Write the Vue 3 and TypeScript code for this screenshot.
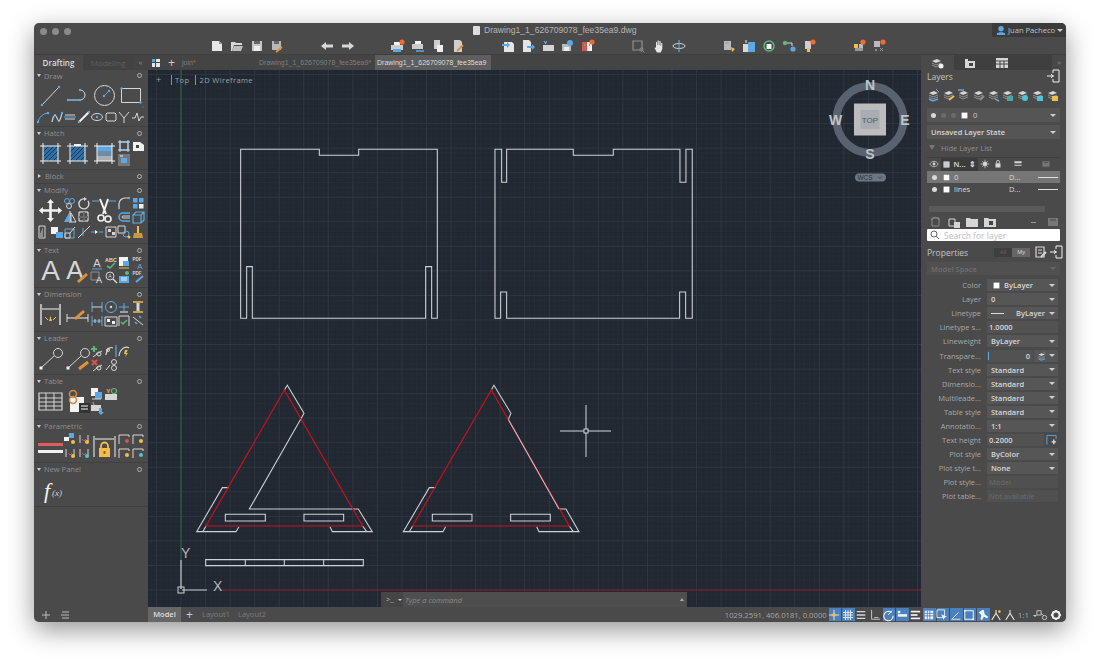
<script setup lang="ts">
import { h } from 'vue'

// 图标用的形状：路径或文字
interface Shape {
  d?: string
  s?: string
  f?: string
  w?: number
  t?: string
  x?: number
  y?: number
  z?: number
  b?: number
}

const G = '#d6d6d6'
const W = '#f2f2f2'
const B = '#5aa9e6'
const Y = '#f3bd4b'
const R = '#d9534f'
const O = '#f26a2e'
const N = '#5cb87a'
const D = '#8f8f8f'

const L = (d: string, s = G, w = 1): Shape => ({ d, s, w })
const F = (d: string, f = G): Shape => ({ d, f })
const T = (x: number, y: number, z: number, t: string, f = G, b = 400): Shape => ({ x, y, z, t, f, b })
const circ = (x: number, y: number, r: number) =>
  `M${x - r} ${y}a${r} ${r} 0 1 0 ${r * 2} 0a${r} ${r} 0 1 0 ${-r * 2} 0`
const box = (x: number, y: number, w: number, hh: number) => `M${x} ${y}h${w}v${hh}h${-w}z`
const dot = (x: number, y: number, c = B, r = 1.2) => F(circ(x, y, r), c)

// 图层图标：叠起来的几张纸
const sheets = [F('M2 5l5-2 4 2-5 2z', G), L('M2 7l4 2 5-2M2 9l4 2 5-2', D)]
const stack = (...extra: Shape[]) => [...sheets, ...extra]
const hatched = [
  F(box(6, 6, 15, 15), '#2f6ea5'),
  L('M6 12l6-6M6 17l11-11M6 21l15-15M11 21l10-10M16 21l5-5', '#1d3a55'),
  L('M3 6h21M3 21h21M6 3v21M21 3v21', W),
]
const ctr = (c: string) => [L('M3 3v8M11 3v8', G), L('M5 7l2 2 2-2', R), dot(10, 10, c, 2)]
const frame = (c: string) => [L('M2 12V3h10v2', G), dot(10, 9, c, 2)]

const icons: Record<string, Shape[]> = {
  // Draw
  line: [L('M5 23L22 5'), dot(5, 23), dot(22, 5)],
  poly: [L('M4 18h12a5 5 0 0 0 0-10'), L('M4 18h12', B), dot(4, 18), dot(16, 18), dot(16, 8)],
  circle: [L(circ(13.5, 13.5, 10)), L('M13.5 13.5l4-4', B), dot(13, 14), dot(18, 9)],
  rect: [L(box(3.5, 6.5, 19, 14)), dot(3.5, 6.5), dot(22.5, 20.5), dot(25, 25, D, 0.6)],
  arc: [L('M2 12a11 11 0 0 1 10-9', B), dot(2, 12), dot(12, 3)],
  spline: [L('M2 12l3-8 4 8 3-9', B), L('M2 12c1-7 3-9 5-4s3 4 5-5'), dot(12, 3)],
  mline: [L('M2 5h10M2 9h10'), L('M1 7h12', B)],
  pline2: [L('M2 12L12 2', W, 2), dot(2, 12), dot(12, 2)],
  ellipse: [L('M1.5 7a5.5 3.5 0 1 0 11 0a5.5 3.5 0 1 0-11 0'), dot(7, 7)],
  rrect: [L('M3 3h8l1 1v6l-1 1H3l-1-1V4z')],
  ray: [L('M2 2l5 6 5-6M7 8v5')],
  wave: [L('M1 8h3l2-5 2 8 2-4h3')],
  // Hatch
  hatch1: [...hatched],
  hatch2: [...hatched, F(box(10, 4, 7, 2), W)],
  hatch3: [F(box(6, 6, 15, 5), B), F(box(6, 11, 15, 5), '#6e8ca6'), F(box(6, 16, 15, 5), '#a9afb5'), L('M3 6h21M3 21h21M6 3v21M21 3v21', W)],
  bound: [L(box(3, 3, 8, 8), B, 1.5), L('M1 3h12M1 11h12M3 1v12M11 1v12', G)],
  label: [F('M2 3h7l4 3v6H2z', W), F(box(5, 6, 3, 3), '#444')],
  sel: [F(box(1, 1, 12, 12), '#777'), F(box(4, 5, 6, 5), B), L('M3 3h3', W)],
  // Modify
  move: [F('M13.5 2l3.5 4h-2.2v6.3h6.3V10l4 3.5-4 3.5v-2.2h-6.3v6.3H17l-3.5 4-3.5-4h2.2v-6.3H5.9V17l-4-3.5 4-3.5v2.3h6.3V6H10z', W)],
  scissors: [L('M1 4h7M17 4h8', B), L('M9 2l6 15M17 2l-5 15', W, 2), L(circ(10, 21, 3), W, 1.6), L(circ(17, 22, 3), W, 1.6)],
  copy: [L(circ(4, 5, 2.5), B), L(circ(9, 5, 2.5), B), L(circ(6, 10, 2.5), G)],
  rotate: [L('M11 5a5 5 0 1 1-3-2', G, 1.4), F('M7 1l3 2-3 2z', G)],
  fillet: [L('M2 13V8a6 6 0 0 1 6-6h5', G, 1.2), dot(2, 12), dot(12, 2)],
  array: [F(box(2, 2, 4.5, 4.5), B), F(box(8, 2, 4.5, 4.5), B), F(box(2, 8, 4.5, 4.5), B), F(box(8, 8, 4.5, 4.5), W)],
  mirror: [F('M6 3v9H1z', B), L('M8 3l5 9H8z', G), L('M7 1v12', W)],
  stretch: [L(box(2, 2, 9, 9), W, 1), L('M2 7h9M7 2v9', '#666', 2)],
  offset: [L('M13 3H6a4 4 0 0 0 0 8h7', B, 1.5), L('M13 6H6a1 1 0 0 0 0 2h7', G)],
  box3d: [L('M2 5h8v8H2zM2 5l3-3h8v8l-3 3M10 5l3-3', B, 1.2)],
  erase: [L('M3 1h6v12H3z', G), F('M4 9l3-7v11H3z', D)],
  copy2: [F(box(1, 2, 7, 7), W), F(box(6, 7, 7, 6), B)],
  scale: [L(box(2, 4, 9, 9), B), L(box(2, 8, 5, 5), G), L('M7 8l5-6', G)],
  trim: [L('M1 13L13 1', G), L('M6 3v8', B)],
  join: [L('M1 7h4M9 7h4', B), F('M5 5l3 2-3 2z', W)],
  matchp: [L(box(2, 2, 10, 10)), F(box(4, 4, 3, 3)), F(box(8, 7, 3, 3))],
  group: [L(box(1, 1, 7, 7), G), L(circ(9, 9, 3), B), dot(12, 12, Y, 1.5)],
  broom: [F(box(6, 1, 2, 7), Y), F('M3 8h8l1 5H2z', '#c99a3d')],
  // Text
  bigA: [T(13.5, 23, 28, 'A', G, 400)],
  bigAp: [T(11, 22, 26, 'A', G, 400), L('M14 25l9-8', '#e0913c', 3)],
  underA: [T(7, 11, 11, 'A', G), L('M2 13h10', B)],
  abc: [T(7, 6, 5.5, 'ABC', G, 700), L('M3 10l3 2 5-5', N, 1.6)],
  tbl2: [F(box(2, 1, 9, 9), W), F(box(6, 5, 6, 5), B), L('M2 12h10', Y)],
  pdfA: [T(6, 5, 4.5, 'PDF', G, 700), T(9, 13, 8, 'A', B)],
  findA: [L(box(1, 2, 8, 8), D), T(9, 13, 9, 'A', W)],
  mag: [L(circ(6, 6, 4), G), L('M9 9l4 4', G, 1.5), T(6, 8, 5, 'A', G)],
  colorT: [F(box(2, 6, 10, 7), B), L('M4 8h6M4 10h6', W), dot(10, 3, N, 2)],
  pdfP: [T(6, 5, 4.5, 'PDF', G, 700), L('M5 12l7-6', B, 2)],
  // Dimension
  dim1: [L('M4 3v21M23 3v21', G, 1.5), L('M5 8h17', W), F('M12 20l1.5-5 1.5 5z', Y), L('M8 16l3 3M19 16l-3 3', Y)],
  dim2: [L('M3 13v8M24 13v8', G), L('M3 17h21', W), L('M11 18l9-8', '#e0913c', 3)],
  dimH: [L('M2 2v10M12 2v10', B), L('M2 7h10', G)],
  dimO: [L(circ(7, 7, 5.5), B), dot(7, 7, G, 1.2)],
  dimT: [L('M2 7h10M7 3v8', B), L('M3 12h8', W)],
  dimI: [L('M2 2h10M2 12h10', Y, 1.5), F(box(5.5, 3, 3, 8), G)],
  dimC: [L('M2 2v10M12 2v10M2 7h10', B), L('M5 5v4M9 5v4', G)],
  dimB: [L(box(1, 3, 12, 9), G), F(box(3, 5, 3, 3), W), F(box(8, 7, 3, 3), W)],
  dimV: [L('M2 12V2h10v10', G), L('M4 8l2 2 4-4', N, 1.5)],
  dimX: [L('M2 3l10 8', G), L('M8 2l2 2M4 8l2 2', B, 1.5)],
  // Leader
  lead: [L(circ(21, 8, 4.5), G), L('M4 23L17 11', G), F(box(2.5, 21.5, 3, 3), W)],
  leadP: [L(circ(21, 8, 4.5), G), L('M4 23L17 11', G), F(box(2.5, 21.5, 3, 3), W), L('M15 24l9-7', '#e0913c', 3)],
  leadAdd: [L('M4 2v6M1 5h6', N, 2), L('M6 10l6-3M3 13l4-3', G), L(circ(9, 10, 2), G)],
  leadRm: [L('M2 2l5 5M7 2L2 7', R, 2), L('M6 10l6-3M3 13l4-3', G), L(circ(9, 10, 2), G)],
  curve: [L('M2 11c1-8 5-8 7-7', G, 1.2), L('M12 1v12', B, 1.2), L(circ(4, 6, 1.5), G)],
  curve2: [L('M2 12c1-8 7-10 10-8', G, 1.2), F('M8 6l3 0-2 3 2 0-3 4 1-3-2 0z', Y)],
  leadB: [L('M2 12l4-5', G), L(circ(10, 4, 2.5), G), L(circ(10, 10, 2.5), G)],
  // Table
  table: [L(box(2, 5, 23, 17), G, 1.2), L('M2 10h23M2 14h23M2 18h23M9 5v17M17 5v17', G)],
  tableL: [F(box(6, 9, 14, 15), W), F(box(15, 15, 11, 10), '#333'), L('M17 18h7M17 21h7', W), L(circ(9, 6, 3.5), '#cf8a4a', 1.6), L(circ(9, 12, 3.5), '#cf8a4a', 1.6)],
  tblA: [F(box(1, 1, 7, 8), W), F(box(5, 5, 7, 7), B), L('M2 12h9', G)],
  tblB: [L('M3 2l2 4M6 2L4 6', '#cf8a4a', 1.3), F(box(1, 7, 12, 6), G), L(circ(10, 4, 2.5), N, 1.2)],
  tblC: [L('M3 1l1 3', '#cf8a4a', 1.3), F(box(1, 4, 10, 6), G), F('M9 7h3v4h2l-3 3-3-3h1z', B)],
  // Parametric
  eq: [F(box(1, 10, 25, 3), '#e25b5b'), F(box(1, 17, 25, 3), W)],
  geo: [F(box(6, 1, 5, 5), B), F(box(1, 5, 5, 4), W), dot(10, 10, Y, 2)],
  ctrY: ctr(Y),
  ctrC: ctr('#4fc3d9'),
  ctrM: ctr(Y),
  lock: [L('M3 3v21M24 3v21', G, 1.2), L('M4 6h19', W), L('M10 16v-3a3.5 3.5 0 0 1 7 0v3', Y, 1.8), F(box(8, 15, 11, 9), Y), F(box(12.5, 18, 2, 3), '#8a6a1f')],
  frR: frame(R),
  frY: frame(Y),
  frB: frame(Y),
  frC: frame('#4fc3d9'),
  fx: [T(10, 22, 22, 'f', W), T(20, 20, 9, '(x)', G)],
  // 工具栏
  fnew: [F('M2 2h7l3 3v7H2z', '#e8e8e8'), F('M9 2l3 3H9z', '#999')],
  fopen: [F('M1 3h4l1 1h6v2H4l-2 6H1z', '#d8d8d8'), F('M4 7h9l-2 5H2z', '#bdbdbd')],
  fsave: [F(box(2, 2, 10, 10), '#c8c8c8'), F(box(4, 2, 6, 3), '#666'), F(box(4, 7, 6, 5), '#eee')],
  fsaveas: [F(box(2, 2, 9, 9), '#b8b8b8'), F(box(4, 2, 5, 3), '#666'), L('M6 13l6-5', '#e0913c', 2)],
  undo: [F('M1 7l5-4v2.5h7v3H6V11z', '#d8d8d8')],
  redo: [F('M13 7L8 3v2.5H1v3h7V11z', '#d8d8d8')],
  plot: [F(box(4, 2, 6, 3), W), F(box(1, 5, 12, 5), '#ccc'), F(box(3, 9, 8, 4), B)],
  plotDot: [F(box(3, 3, 6, 3), W), F(box(0, 6, 12, 5), '#ccc'), F(box(2, 10, 8, 3), B), F(circ(11, 3, 2.6), O)],
  plot2: [F(box(4, 2, 6, 3), W), F(box(1, 5, 11, 5), '#ccc'), L('M5 12h8', B, 1.5)],
  sheet: [F(box(3, 1, 6, 9), '#cfcfcf'), F(box(6, 6, 6, 7), '#eee')],
  sheetP: [F('M3 1h6l2 2v10H3z', '#cfcfcf'), L('M6 12l6-6', '#e0913c', 2)],
  impt: [F('M3 3h8l2 2v8H3z', '#e4e4e4'), F('M1 5h5V3l3 3-3 3V7H1z', B)],
  expt: [F('M2 1h6l2 2v10H2z', '#e4e4e4'), F('M6 7h5V5l3 3-3 3V9H6z', B)],
  share: [L('M3 2l2 3M6 2L4 5', B, 1.2), F(box(2, 6, 11, 6), '#d4d4d4')],
  cloud: [F(box(1, 5, 9, 7), '#bbb'), F(box(3, 8, 5, 4), '#eee'), F(circ(9, 4, 3), B)],
  cmp: [F(box(1, 3, 5, 9), R), F(box(6, 3, 5, 9), W), L('M3 6h1M8 6h1', N, 2), F(circ(11, 3, 2.6), O)],
  zoomw: [L(box(2, 2, 9, 9), D, 1.2), L(circ(10.5, 10.5, 1.6), D), L('M11.5 11.5l2 2', D)],
  hand: [F('M4 6V3h1v3h.6V1.5h1.2V6h.6V2h1.2v5h.5V4h1.2v6l-1.5 3.5H5L2.5 9l.7-.7L4 9z', '#e6e6e6')],
  orbit: [L('M1 7a6 2.5 0 1 0 12 0a6 2.5 0 1 0-12 0', G), L('M7 1v12', B, 1.2)],
  block: [F(box(2, 2, 7, 9), '#b9b9b9'), L('M3 4h4', B), F('M9 8l4 2-3 3z', Y)],
  insert: [F(box(1, 5, 6, 8), '#d8d8d8'), F(box(6, 3, 7, 10), B), L('M4 1v3', W)],
  xref: [L(circ(7, 7, 5), N, 1.5), F(box(4.5, 5, 5, 5), W)],
  nodes: [dot(3, 4, N, 2.2), dot(11, 10, B, 2.6), L('M5 4h5v3', G)],
  mark: [F(box(3, 2, 6, 8), '#cfcfcf'), F(box(5, 9, 3, 4), Y), F(circ(11, 3, 2.6), O)],
  gridDot: [F(box(2, 5, 4, 4), Y), F(box(7, 5, 4, 4), '#bbb'), F(box(3, 9, 8, 3), '#999'), F(circ(11, 3, 2.6), O)],
  cogDot: [F(box(2, 2, 6, 6), '#bbb'), L('M3 10l2 2M5 10l-2 2M8 9l3 3M11 9l-3 3', D), F(circ(11, 3, 2.6), O)],
  // Layers 面板
  lay1: [...sheets, L('M2 11l4 2 5-2', B, 1.5), L('M9 1l3 3', B)],
  lay2: stack(L('M7 12l5-4', Y, 2)),
  lay3: stack(L('M1 2h6', B, 1.5)),
  lay4: stack(L('M8 12l4-4', D, 2)),
  lay5: stack(L('M8 11l4 2', B, 1.5)),
  lay6: stack(F(box(6, 8, 6, 5), '#4fa5a5')),
  lay7: stack(F(circ(9, 10, 3), '#4fc3d9')),
  lay8: stack(F(box(6, 8, 6, 5), '#4fc3d9')),
  lay9: stack(F(box(6, 8, 6, 5), Y)),
  eye: [L('M1 7c3-5 9-5 12 0c-3 5-9 5-12 0', G), F(circ(7, 7, 2), G)],
  freeze: [F(circ(7, 7, 3), G), L('M7 1v12M1 7h12M3 3l8 8M11 3l-8 8', G)],
  padlock: [L('M5 6V4a2 2 0 0 1 4 0v2', G, 1.2), F(box(3.5, 6, 7, 6), G)],
  weight: [F(box(2, 3, 10, 3), G), F(box(2, 8, 10, 1.5), G)],
  vp: [F(box(2, 3, 10, 8), '#777'), L('M4 5h6', '#444')],
  lnew: [L('M3 3h7v8H3z', '#8a8a8a'), L('M2 5l4-3 5 3', '#8a8a8a')],
  lfilter: [L('M2 4h6v7H2z', G), F(box(7, 7, 6, 6), G)],
  lfolder: [F('M1 3h4l1 1h7v8H1z', G)],
  lfolder2: [F('M1 3h4l1 1h7v8H1z', G), F(box(6, 6, 4, 4), '#444')],
  exit: [L('M7 1h6v12H7M7 4V1M7 13v-3', W), L('M1 7h7M5 5l2 2-2 2', W)],
  note: [L(box(2, 2, 8, 10), G, 1.2), L('M4 5h4M4 8h4', G), L('M7 12l5-5', G, 2)],
  tab1: [...sheets, F(circ(11, 10, 2.5), W)],
  tab2: [F('M2 3h3v2h7v7H2z', G), F(box(6, 7, 4, 3), '#444')],
  tab3: [F(box(1, 2, 12, 10), G), L('M1 5h12M1 8h12M5 5v7M9 5v7', '#444')],
  // 状态栏
  snap: [L('M7 1v12M1 7h12', W), F('M7 4l3 3-3 3-3-3z', Y)],
  grid: [L('M1 4h12M1 7h12M1 10h12M4 1v12M7 1v12M10 1v12', W)],
  dots: [L('M2 3h10M2 7h10M2 11h10', G, 1.6)],
  ortho: [L('M3 1v11h10', G), L('M6 10h5', G)],
  polar: [L('M11 4a5.5 5.5 0 1 0 2 4', W, 1.3), L('M7 7l5-5', W)],
  lweight: [F(box(2, 6, 11, 3), W), F(box(2, 2, 3, 3), W)],
  dyn: [F(box(2, 2, 11, 2), W), F(box(2, 6, 8, 2), W), F(box(2, 10, 11, 2), W)],
  trans: [F(box(2, 2, 10, 10), W), L('M2 5h10M2 8h10M5 2v10M8 2v10', '#4a80bd')],
  selc: [L(box(1, 1, 9, 9), W), F('M6 6l7 3-3 1-1 3z', W)],
  angle: [L('M2 12h10M2 12l8-8', W)],
  sq: [L(box(2, 2, 10, 10), W, 1.2), F(box(1, 1, 2, 2), W), F(box(11, 11, 2, 2), W)],
  anno: [F('M6 1h2l1 5 4 3-1 2-4-2-2 4-2-1 1-5-3-3z', W)],
  annoD: [L('M2 13l5-8 5 8M7 5V1', W, 1.2), dot(11, 3, Y, 1.6)],
  annoS: [L('M2 13l5-8 5 8M7 5V1', W, 1.2)],
  work: [L(box(1, 2, 5, 5), G), L(circ(10, 10, 2.5), G), L('M6 5l3 3', G)],
  gear: [L(circ(7, 7, 4.2), W, 2.4), L('M7 1v2M7 11v2M1 7h2M11 7h2M3 3l1.4 1.4M9.6 9.6L11 11M11 3L9.6 4.4M4.4 9.6L3 11', W, 2)],
}

// 小图标组件，每个图标只画 path 和文字
function Ico(props: { n: string; size?: number }) {
  const size = props.size ?? 14
  const shapes = icons[props.n] ?? []
  return h(
    'svg',
    { width: size, height: size, viewBox: `0 0 ${size} ${size}`, style: { display: 'block', overflow: 'visible', flex: 'none' } },
    shapes.map((p) =>
      p.t
        ? h('text', { x: p.x, y: p.y, 'font-size': p.z, 'font-weight': p.b, fill: p.f, 'text-anchor': 'middle', 'font-family': p.t === 'f' || p.t === '(x)' ? '"Liberation Serif", serif' : '"Liberation Sans", sans-serif', 'font-style': p.t === 'f' || p.t === '(x)' ? 'italic' : 'normal' }, p.t)
        : h('path', { d: p.d, fill: p.f ?? 'none', stroke: p.s ?? 'none', 'stroke-width': p.w ?? 1 }),
    ),
  )
}

// 左侧面板
const b = (n: string) => ({ n, big: true })
const s = (n: string) => ({ n, big: false })
const panels = [
  { title: 'Draw', height: 57, items: [b('line'), b('poly'), b('circle'), b('rect'), ...['arc', 'spline', 'mline', 'pline2', 'ellipse', 'rrect', 'ray', 'wave'].map(s)] },
  { title: 'Hatch', height: 43, items: [b('hatch1'), b('hatch2'), b('hatch3'), s('bound'), s('label'), s('sel')] },
  { title: 'Block', height: 14, closed: true, items: [] },
  { title: 'Modify', height: 60, items: [b('move'), s('copy'), s('rotate'), b('scissors'), s('fillet'), s('array'), s('mirror'), s('stretch'), s('offset'), s('box3d'), ...['erase', 'copy2', 'scale', 'trim', 'join', 'matchp', 'group', 'broom'].map(s)] },
  { title: 'Text', height: 44, items: [b('bigA'), b('bigAp'), ...['underA', 'abc', 'tbl2', 'pdfA', 'findA', 'mag', 'colorT', 'pdfP'].map(s)] },
  { title: 'Dimension', height: 44, items: [b('dim1'), b('dim2'), ...['dimH', 'dimO', 'dimT', 'dimI', 'dimC', 'dimB', 'dimV', 'dimX'].map(s)] },
  { title: 'Leader', height: 43, items: [b('lead'), b('leadP'), s('leadAdd'), s('curve'), s('curve2'), s(''), s('leadRm'), s('leadB')] },
  { title: 'Table', height: 45, items: [b('table'), b('tableL'), s('tblA'), s('tblB'), s(''), s(''), s('tblC')] },
  { title: 'Parametric', height: 43, items: [b('eq'), s('geo'), s('ctrY'), b('lock'), s('frR'), s('frY'), s('ctrM'), s('ctrC'), s('frB'), s('frC')] },
  { title: 'New Panel', height: 44, items: [b('fx')] },
]

// 顶部工具栏分组
const toolGroups = [
  ['fnew', 'fopen', 'fsave', 'fsaveas'],
  ['undo', 'redo'],
  ['plotDot', 'plot2', 'sheet', 'sheetP'],
  ['impt', 'expt', 'share', 'cloud', 'cmp'],
  ['zoomw', 'hand', 'orbit'],
  ['block', 'insert', 'xref', 'nodes', 'mark'],
  ['gridDot', 'cogDot'],
]

const layerTools = ['lay1', 'lay2', 'lay3', 'lay4', 'lay5', 'lay6', 'lay7', 'lay8', 'lay9']
const layers = [
  { name: '0', active: true },
  { name: 'lines', active: false },
]

// 属性面板
const properties = [
  { label: 'Color', value: 'ByLayer', kind: 'color' },
  { label: 'Layer', value: '0', kind: 'select' },
  { label: 'Linetype', value: 'ByLayer', kind: 'linetype' },
  { label: 'Linetype s...', value: '1.0000', kind: 'input' },
  { label: 'Lineweight', value: 'ByLayer', kind: 'select' },
  { label: 'Transpare...', value: '0', kind: 'alpha' },
  { label: 'Text style', value: 'Standard', kind: 'select' },
  { label: 'Dimensio...', value: 'Standard', kind: 'select' },
  { label: 'Multileade...', value: 'Standard', kind: 'select' },
  { label: 'Table style', value: 'Standard', kind: 'select' },
  { label: 'Annotatio...', value: '1:1', kind: 'select' },
  { label: 'Text height', value: '0.2000', kind: 'height' },
  { label: 'Plot style', value: 'ByColor', kind: 'select' },
  { label: 'Plot style t...', value: 'None', kind: 'select' },
  { label: 'Plot style...', value: 'Model', kind: 'disabled' },
  { label: 'Plot table...', value: 'Not available', kind: 'disabled' },
]

const statusIcons = [
  { n: 'snap', on: true },
  { n: 'grid', on: true },
  { n: 'dots', on: false },
  { n: 'ortho', on: false },
  { n: 'polar', on: true },
  { n: 'lweight', on: true },
  { n: 'dyn', on: false },
  { n: 'trans', on: true },
  { n: 'selc', on: true },
  { n: 'angle', on: true },
  { n: 'sq', on: true },
  { n: 'anno', on: true },
  { n: 'annoD', on: false },
  { n: 'annoS', on: false },
]

// 图纸网格，原点在 (181, 590)
const step = 24.55
const minorXs: number[] = []
const minorYs: number[] = []
const majorXs: number[] = []
const majorYs: number[] = []
for (let i = -7; i * (step / 5) + 181 < 925; i++) {
  ;(i % 5 === 0 ? majorXs : minorXs).push(181 + (i * step) / 5)
}
for (let i = -106; i <= 4; i++) {
  ;(i % 5 === 0 ? majorYs : minorYs).push(590 + (i * step) / 5)
}
const gridMinor = [...minorXs.map((x) => `M${x} 70V607`), ...minorYs.map((y) => `M148 ${y}H921`)].join('')
const gridMajor = [...majorXs.map((x) => `M${x} 70V607`), ...majorYs.map((y) => `M148 ${y}H921`)].join('')

// 图形（坐标按 3 倍放大量出来的）
const plateA = 'M32 28H268V46H386V28H622V535H605V380H587V535H67V380H50V535H32Z'
const plateB =
  'M795 28H815V127H830V28H1030V46H1150V28H1350V127H1368V28H1387V535H1367V456H1349V535H830V456H812V535H795Z'
const triWhite =
  'M283 30L292 16L342 100L332 118L178 387H505L547 455H427L420 440M147 440L138 455H20L97 323H117M38 455L48 438M518 438L530 455' +
  'M106 403H226V423H106ZM342 403H461V423H342Z' +
  'M727 403H846V423H727ZM962 403H1081V423H962Z' +
  'M904 30L912 16L963 100L955 118M1107 387H1128L1167 455H1047L1040 440M767 440L759 455H640L718 323H737M658 455L668 438M1138 438L1150 455' +
  'M47 539H520V557H47ZM166 539V557M283 539V557M401 539V557'
const triRed = 'M48 438L283 30L518 438ZM668 438L904 30L1138 438Z'
</script>

<template>
  <div class="page">
    <div class="window">
      <!-- 标题栏 -->
      <header class="titlebar">
        <div class="lights"><i></i><i></i><i></i></div>
        <div class="title">
          <span class="title-icon"></span>
          Drawing1_1_626709078_fee35ea9.dwg
        </div>
        <div class="user">
          <svg class="user-icon" width="10" height="11" viewBox="0 0 11 11"><circle cx="5.5" cy="3.5" r="3" fill="#5aa9e6" /><path d="M1 10.5h9v-2l-3-1H4l-3 1z" fill="#5aa9e6" /></svg>
          <span>Juan Pacheco</span>
          <b class="caret"></b>
        </div>
      </header>

      <!-- 工具栏 -->
      <div class="toolbar">
        <div v-for="(group, i) in toolGroups" :key="i" class="tool-group">
          <span v-for="n in group" :key="n" class="tool"><Ico :n="n" /></span>
        </div>
      </div>

      <div class="workspace">
        <!-- 左侧工具面板 -->
        <aside class="left">
          <div class="left-tabs">
            <span class="left-tab on">Drafting</span>
            <span class="left-tab">Modeling</span>
            <span class="collapse">«</span>
          </div>
          <section v-for="p in panels" :key="p.title" class="panel" :style="{ height: p.height + 'px' }">
            <div class="panel-head">
              <b :class="p.closed ? 'tri-right' : 'tri-down'"></b>
              <span>{{ p.title }}</span>
              <i class="panel-gear"></i>
            </div>
            <div class="panel-body">
              <span v-for="(it, i) in p.items" :key="i" :class="it.big ? 'cell-big' : 'cell'">
                <Ico v-if="it.n" :n="it.n" :size="it.big ? 27 : 14" />
              </span>
            </div>
          </section>
          <div class="left-foot">
            <svg width="10" height="10" viewBox="0 0 10 10"><path d="M5 1v8M1 5h8" stroke="#bdbdbd" /></svg>
            <svg width="10" height="10" viewBox="0 0 10 10"><path d="M2 2h7M1 5h8M2 8h7" stroke="#bdbdbd" /></svg>
          </div>
        </aside>

        <div class="main">
          <div class="main-top">
            <!-- 中间绘图区 -->
            <main class="center">
              <div class="doc-tabs">
                <span class="doc-grid"><i></i><i></i><i></i><i></i></span>
                <span class="doc-plus">+</span>
                <span class="doc-tab first">join*</span>
                <span class="doc-tab wide">Drawing1_1_626709078_fee35ea9*</span>
                <span class="doc-tab active">Drawing1_1_626709078_fee35ea9</span>
              </div>

              <div class="canvas">
                <svg class="drawing" viewBox="148 70 773 537" width="773" height="537">
                  <path :d="gridMinor" stroke="#252c36" fill="none" />
                  <path :d="gridMajor" stroke="#2f3742" fill="none" />
                  <path d="M181 70V560" stroke="#2f6a38" fill="none" />
                  <path d="M222 590H921" stroke="#8a1c24" fill="none" />

                  <g fill="none" stroke="#cfd2d5" stroke-width="3.2">
                    <path transform="translate(230 140) scale(.3333)" :d="plateA" />
                    <path transform="translate(230 140) scale(.3333)" :d="plateB" />
                    <path transform="translate(190 380) scale(.3333)" :d="triWhite" />
                    <path transform="translate(190 380) scale(.3333)" :d="triRed" stroke="#c8101e" stroke-width="3.6" />
                    <path transform="translate(190 380) scale(.3333)" d="M955 118L1107 387" stroke="#dcb6b8" />
                  </g>

                  <!-- UCS -->
                  <g fill="none" stroke="#c9cdd0">
                    <path d="M181 589V560M182 590H207" stroke-width="1.2" />
                    <rect x="178" y="587" width="6" height="6" />
                  </g>
                  <text x="181" y="558" class="ucs">Y</text>
                  <text x="213" y="591" class="ucs">X</text>

                  <!-- 十字光标 -->
                  <g fill="none" stroke="#d5d8da">
                    <path d="M560 431H584M588 431H611M586 405V429M586 433V457" />
                    <rect x="584" y="429" width="4" height="4" />
                  </g>

                  <!-- ViewCube -->
                  <circle cx="870" cy="119.500" r="33.500" fill="none" stroke="#59636f" stroke-width="8" />
                  <rect x="854" y="103.500" width="32" height="32" fill="#bcbcbc" />
                  <rect x="860.500" y="110" width="19" height="19" fill="#a7adb2" />
                  <text x="870" y="122.500" class="cube-top">TOP</text>
                  <text x="870" y="90" class="compass">N</text>
                  <text x="870" y="159" class="compass">S</text>
                  <text x="905" y="124.500" class="compass">E</text>
                  <text x="835.500" y="124.500" class="compass">W</text>
                  <rect x="855" y="173.500" width="31" height="8" rx="4" fill="#6b7785" />
                  <text x="865" y="180" class="wcs">WCS</text>
                  <path d="M878 176.500l2 2 2-2" stroke="#2a323c" fill="none" stroke-width=".7" />
                </svg>

                <div class="view-label">
                  <span class="view-plus">+</span>
                  <span class="view-item">Top</span>
                  <span class="view-item">2D Wireframe</span>
                </div>

                <div class="command">
                  <span class="cmd-prefix">&gt;_ <b class="caret small"></b></span>
                  <span class="cmd-input">Type a command</span>
                  <b class="cmd-up"></b>
                </div>
              </div>
            </main>

            <!-- 右侧面板 -->
            <aside class="right">
              <div class="right-tabs">
                <span class="right-tab on"><Ico n="tab1" /></span>
                <span class="right-tab"><Ico n="tab2" /></span>
                <span class="right-tab"><Ico n="tab3" /></span>
                <span class="right-more">»</span>
              </div>

              <div class="side-title">
                <span>Layers</span>
                <Ico n="exit" />
              </div>
              <div class="layer-tools">
                <Ico v-for="n in layerTools" :key="n" :n="n" />
              </div>
              <div class="combo layer-combo">
                <i class="dot"></i>
                <i class="dot dim"></i>
                <i class="dot dim"></i>
                <i class="swatch"></i>
                <span>0</span>
                <b class="caret"></b>
              </div>
              <div class="combo state-combo">
                <span>Unsaved Layer State</span>
                <b class="caret"></b>
              </div>
              <div class="hide-list"><b class="tri-down dim"></b>Hide Layer List</div>

              <div class="layer-head">
                <span class="lh eye"><Ico n="eye" /></span>
                <span class="lh name"><i class="swatch small"></i>N... <em>⇕</em></span>
                <span class="lh sm"><Ico n="freeze" /></span>
                <span class="lh sm"><Ico n="padlock" /></span>
                <span class="lh md"><Ico n="weight" /></span>
                <span class="lh md"><Ico n="vp" /></span>
              </div>
              <div v-for="l in layers" :key="l.name" class="layer-row" :class="{ on: l.active }">
                <i class="dot"></i>
                <i class="swatch"></i>
                <span class="layer-name">{{ l.name }}</span>
                <span class="layer-d">D...</span>
                <i class="layer-line"></i>
              </div>
              <div class="layer-scroll"></div>
              <div class="layer-actions">
                <Ico n="lnew" />
                <Ico n="lfilter" />
                <Ico n="lfolder" />
                <Ico n="lfolder2" />
                <span class="minus"></span>
                <Ico n="vp" />
              </div>
              <div class="search">
                <svg width="10" height="10" viewBox="0 0 10 10"><circle cx="4" cy="4" r="3" stroke="#666" fill="none" /><path d="M6 6l3 3" stroke="#666" /></svg>
                Search for layer
              </div>

              <div class="side-title props-title">
                <span>Properties</span>
                <div class="toggle"><span>All</span><span class="on">My</span></div>
                <Ico n="note" />
                <Ico n="exit" />
              </div>
              <div class="combo space-combo">
                <span>Model Space</span>
                <b class="caret dim"></b>
              </div>

              <div v-for="p in properties" :key="p.label" class="prop-row">
                <label>{{ p.label }}</label>
                <div class="prop-value" :class="p.kind">
                  <i v-if="p.kind === 'color'" class="swatch"></i>
                  <i v-if="p.kind === 'linetype'" class="sample"></i>
                  <i v-if="p.kind === 'alpha'" class="slider"></i>
                  <span>{{ p.value }}</span>
                  <b v-if="['color', 'select', 'linetype'].includes(p.kind)" class="caret"></b>
                </div>
                <div v-if="p.kind === 'alpha'" class="prop-extra">
                  <Ico n="lay1" />
                  <b class="caret"></b>
                </div>
                <div v-if="p.kind === 'height'" class="prop-pick">
                  <svg width="12" height="12" viewBox="0 0 12 12"><path d="M1 11V1h10v4" stroke="#5aa9e6" fill="none" /><path d="M6 8h5M8.500 5.500v5" stroke="#ddd" fill="none" stroke-width="1.500" /></svg>
                </div>
              </div>
            </aside>
          </div>

          <footer class="statusbar">
            <span class="layout-tab on">Model</span>
            <span class="layout-plus">+</span>
            <span class="layout-tab">Layout1</span>
            <span class="layout-tab">Layout2</span>
            <span class="coords">1029.2591, 406.0181, 0.0000</span>
            <span v-for="si in statusIcons" :key="si.n" class="st" :class="{ on: si.on }"><Ico :n="si.n" /></span>
            <span class="scale">1:1 <b class="caret small"></b></span>
            <span class="st"><Ico n="work" /></span>
            <span class="st"><Ico n="gear" /></span>
          </footer>
        </div>
      </div>
    </div>
  </div>
</template>

<style scoped>
.page {
  padding: 23px 34px 45px;
  width: 1032px;
  height: 599px;
}

.window {
  width: 1032px;
  height: 599px;
  display: flex;
  flex-direction: column;
  background-color: #4a4a4a;
  border-radius: 5px;
  box-shadow: 0 8px 26px rgba(0, 0, 0, 0.42);
  color: #c9c9c9;
  font-family: 'Open Sans', 'Liberation Sans', sans-serif;
  font-size: 8px;
  overflow: hidden;
}

.titlebar {
  height: 14px;
  display: flex;
  align-items: center;
  position: relative;
  flex: none;
}

.lights {
  display: flex;
  gap: 5px;
  padding: 3px 0 0 5.5px;
}

.lights i {
  width: 7px;
  height: 7px;
  border-radius: 50%;
  background-color: #8b8b8b;
}

.title {
  position: absolute;
  left: 439px;
  top: 2px;
  display: flex;
  align-items: center;
  gap: 4px;
  font-family: 'Liberation Sans', sans-serif;
  font-size: 8.600px;
  color: #b5b5b5;
}

.title-icon {
  width: 7px;
  height: 9px;
  background-color: #ddd;
  border-radius: 1px;
}

.user {
  margin-left: auto;
  width: 74px;
  height: 14px;
  padding-left: 4px;
  box-sizing: border-box;
  display: flex;
  align-items: center;
  gap: 2px;
  background-color: #3b3b3b;
  font-size: 7.600px;
  color: #c4c4c4;
  white-space: nowrap;
}

.user-icon {
  flex: none;
}

.caret {
  width: 0;
  height: 0;
  margin-left: auto;
  border-left: 3px solid transparent;
  border-right: 3px solid transparent;
  border-top: 3px solid #cfcfcf;
}

.caret.small {
  display: inline-block;
  margin-left: 2px;
  border-width: 2.500px 2px 0;
  vertical-align: middle;
}

.caret.dim {
  border-top-color: #666;
}

.user .caret {
  margin-right: 3px;
}

.toolbar {
  flex: none;
  height: 18px;
  display: flex;
  align-items: center;
  gap: 30px;
  padding-left: 173px;
  border-bottom: 1px solid #3e3e3e;
  box-sizing: border-box;
}

.tool-group {
  display: flex;
}

.tool {
  width: 20.100px;
  display: flex;
  justify-content: center;
}

.workspace {
  flex: 1;
  min-height: 0;
  display: flex;
}

/* 左侧面板 */
.left {
  width: 114px;
  flex: none;
  display: flex;
  flex-direction: column;
}

.left-tabs {
  height: 15px;
  display: flex;
  align-items: center;
}

.left-tab {
  width: 50px;
  height: 15px;
  line-height: 15px;
  text-align: center;
  background-color: #424242;
  color: #5f5f5f;
  font-size: 8px;
}

.left-tab.on {
  width: 49px;
  background-color: #4a4a4a;
  color: #dcdcdc;
  font-weight: 600;
}

.collapse {
  flex: 1;
  text-align: center;
  color: #888;
  background-color: #444;
  height: 15px;
  line-height: 14px;
}

.panel {
  box-sizing: border-box;
  border-bottom: 1px solid #404040;
  overflow: hidden;
  flex: none;
}

.panel-head {
  height: 12px;
  display: flex;
  align-items: center;
  padding: 0 3px;
  box-sizing: border-box;
  font-size: 7.500px;
  color: #8f8f8f;
  gap: 3px;
}

section.panel:first-of-type .panel-head {
  height: 11px;
}

.tri-down {
  width: 0;
  height: 0;
  border-left: 2.500px solid transparent;
  border-right: 2.500px solid transparent;
  border-top: 3px solid #cfcfcf;
}

.tri-down.dim {
  border-left-width: 3.500px;
  border-right-width: 3.500px;
  border-top: 5px solid #777;
  margin-right: 6px;
}

.tri-right {
  width: 0;
  height: 0;
  margin: 0 1px;
  border-top: 2.500px solid transparent;
  border-bottom: 2.500px solid transparent;
  border-left: 3px solid #cfcfcf;
}

.panel-gear {
  margin-left: auto;
  margin-right: 3px;
  width: 3px;
  height: 3px;
  border: 1.500px solid #b5b5b5;
  border-radius: 50%;
}

.panel-body {
  display: grid;
  grid-template-columns: repeat(8, 13.500px);
  grid-auto-rows: 13.500px;
  row-gap: 1px;
  padding-left: 2.500px;
}

.cell,
.cell-big {
  display: flex;
  align-items: center;
  justify-content: center;
}

.cell-big {
  grid-column: span 2;
  grid-row: span 2;
}

.left-foot {
  margin-top: auto;
  height: 15px;
  display: flex;
  align-items: center;
  gap: 9px;
  padding-left: 7px;
}

/* 中间 */
.main {
  flex: 1;
  min-width: 0;
  display: flex;
  flex-direction: column;
}

.main-top {
  flex: 1;
  min-height: 0;
  display: flex;
}

.center {
  width: 773px;
  flex: none;
  display: flex;
  flex-direction: column;
}

.doc-tabs {
  height: 15px;
  display: flex;
  align-items: center;
  background-color: #444;
  font-family: 'Liberation Sans', sans-serif;
  font-size: 7px;
  color: #7e7e7e;
  flex: none;
}

.doc-grid {
  width: 15px;
  height: 15px;
  padding: 3.500px;
  box-sizing: border-box;
  display: grid;
  grid-template-columns: 1fr 1fr;
  gap: 1px;
}

.doc-grid i {
  background-color: #dfe6ee;
}

.doc-grid i:first-child {
  background-color: #5aa9e6;
}

.doc-plus {
  width: 17px;
  text-align: center;
  color: #ccc;
  font-size: 12px;
  line-height: 14px;
}

.doc-tab {
  height: 15px;
  line-height: 15px;
  padding-left: 2px;
  box-sizing: border-box;
}

.doc-tab.first {
  width: 77px;
}

.doc-tab.wide {
  width: 118px;
}

.doc-tab.active {
  width: 116px;
  background-color: #5e5e5e;
  color: #dcdcdc;
}

.canvas {
  position: relative;
  height: 537px;
  flex: none;
  background-color: #212832;
  overflow: hidden;
}

.drawing {
  display: block;
}

.ucs {
  font-family: 'Liberation Sans', sans-serif;
  font-size: 14px;
  fill: #b4b8bc;
}

.cube-top {
  font-family: 'Liberation Sans', sans-serif;
  font-size: 8px;
  fill: #555;
  text-anchor: middle;
}

.compass {
  font-family: 'Liberation Sans', sans-serif;
  font-size: 14px;
  font-weight: 700;
  fill: #bfc4c8;
  text-anchor: middle;
}

.wcs {
  font-family: 'Liberation Sans', sans-serif;
  font-size: 6.500px;
  fill: #2a323c;
  text-anchor: middle;
}

.view-label {
  position: absolute;
  left: 8px;
  top: 3px;
  display: flex;
  align-items: center;
  font-size: 7.500px;
  letter-spacing: 0.4px;
  color: #9aa0a6;
}

.view-plus {
  width: 15px;
  font-size: 9px;
}

.view-item {
  border-left: 1px solid #8b9096;
  padding: 0 6px 0 3px;
  line-height: 10px;
}

.command {
  position: absolute;
  left: 233px;
  bottom: 0;
  width: 306px;
  height: 15px;
  display: flex;
  align-items: center;
  background-color: #4e4e4e;
  color: #8a8a8a;
  font-size: 7.500px;
}

.cmd-prefix {
  width: 22px;
  padding-left: 5px;
  box-sizing: border-box;
  height: 15px;
  line-height: 15px;
  background-color: #454545;
  margin-right: 2px;
  color: #bbb;
  white-space: nowrap;
}

.cmd-input {
  font-style: italic;
}

.cmd-up {
  margin-left: auto;
  margin-right: 3px;
  width: 0;
  height: 0;
  border-left: 2.500px solid transparent;
  border-right: 2.500px solid transparent;
  border-bottom: 3px solid #aaa;
}

.statusbar {
  height: 15px;
  flex: none;
  display: flex;
  align-items: center;
  background-color: #4a4a4a;
  font-size: 7.500px;
  color: #7d7d7d;
  padding-right: 3.300px;
}

.layout-tab {
  height: 15px;
  line-height: 15px;
  width: 36px;
  text-align: center;
}

.layout-tab.on {
  width: 33px;
  background-color: #676767;
  color: #dedede;
  font-weight: 600;
}

.layout-plus {
  width: 17px;
  text-align: center;
  font-size: 12px;
  line-height: 13px;
  color: #ccc;
}

.coords {
  margin-left: auto;
  margin-right: 1px;
  font-size: 7.700px;
  color: #a5a5a5;
  white-space: nowrap;
}

.st {
  width: 13.500px;
  height: 13px;
  display: flex;
  align-items: center;
  justify-content: center;
  flex: none;
}

.st svg {
  transform: scale(0.85);
}

.st.on {
  background-color: #4a80bd;
  box-shadow: inset 1px 0 0 #4a4a4a;
}

.scale {
  width: 19px;
  padding-left: 1px;
  box-sizing: border-box;
  color: #a5a5a5;
  font-size: 8px;
  white-space: nowrap;
}

/* 右侧 */
.right {
  width: 145px;
  flex: none;
  box-sizing: border-box;
  padding: 0 6px;
  display: flex;
  flex-direction: column;
  font-size: 7.500px;
}

.right-tabs {
  height: 15px;
  margin: 0 -6px;
  display: flex;
  background-color: #3f3f3f;
  flex: none;
}

.right-tab {
  width: 32.500px;
  display: flex;
  align-items: center;
  justify-content: center;
}

.right-tab.on {
  background-color: #4a4a4a;
}

.right-more {
  margin-left: auto;
  width: 14px;
  text-align: center;
  color: #888;
  line-height: 14px;
  background-color: #484848;
}

.side-title {
  height: 12px;
  display: flex;
  align-items: center;
  justify-content: space-between;
  font-size: 8.500px;
  color: #c4c4c4;
  flex: none;
}

.layer-tools {
  display: flex;
  justify-content: space-between;
  height: 14px;
  margin: 6px 0;
  flex: none;
}

.combo {
  height: 14px;
  display: flex;
  align-items: center;
  padding: 0 4px;
  box-sizing: border-box;
  background-color: #555;
  border-radius: 1px;
  flex: none;
}

.layer-combo {
  gap: 5px;
}

.state-combo {
  margin-top: 3px;
  color: #d5d5d5;
  font-weight: 600;
  font-size: 7.500px;
}

.dot {
  width: 5px;
  height: 5px;
  border-radius: 50%;
  background-color: #d8d8d8;
  flex: none;
}

.dot.dim {
  background-color: #6a6a6a;
}

.swatch {
  width: 5px;
  height: 5px;
  background-color: #fff;
  border: 1px solid #222;
  outline: 1px solid #999;
  outline-offset: -1px;
  flex: none;
  border-radius: 1px;
}

.swatch.small {
  background-color: #ccc;
  margin-right: 3px;
}

.hide-list {
  height: 17.500px;
  display: flex;
  align-items: center;
  padding-left: 2px;
  color: #8f8f8f;
  flex: none;
}

.layer-head {
  height: 14.500px;
  display: flex;
  border-top: 1px solid #3f3f3f;
  box-sizing: border-box;
  flex: none;
}

.lh {
  display: flex;
  align-items: center;
  justify-content: center;
}

.lh svg {
  width: 10px;
  height: 10px;
}

.lh.eye {
  width: 14px;
}

.lh.name {
  width: 37px;
  background-color: #3c3c3c;
  color: #ddd;
  font-weight: 600;
  white-space: nowrap;
}

.lh.name em {
  font-style: normal;
  margin-left: 3px;
}

.lh.sm {
  width: 13px;
}

.lh.md {
  width: 28px;
}

.layer-row {
  height: 12px;
  display: flex;
  align-items: center;
  padding-left: 5px;
  color: #d8d8d8;
  flex: none;
}

.layer-row.on {
  background-color: #767676;
}

.layer-row .swatch {
  margin-left: 6px;
}

.layer-name {
  width: 55px;
  margin-left: 3px;
  padding-left: 1px;
}

.layer-d {
  width: 29px;
}

.layer-line {
  width: 20px;
  height: 0;
  border-top: 1px solid #e0e0e0;
}

.layer-scroll {
  margin: 11px 15px 0 2px;
  height: 6px;
  background-color: #5a5a5a;
  border-radius: 1px;
  flex: none;
}

.layer-actions {
  margin-top: 3px;
  height: 14px;
  display: flex;
  align-items: center;
  gap: 4px;
  padding-left: 2px;
  flex: none;
}

.minus {
  margin-left: 30px;
  margin-right: 6px;
  width: 5px;
  border-top: 1px solid #999;
}

.search {
  height: 12px;
  background-color: #fff;
  border-radius: 1px;
  display: flex;
  align-items: center;
  gap: 4px;
  padding-left: 3px;
  color: #bdbdbd;
  font-size: 8.500px;
  flex: none;
}

.props-title {
  margin-top: 5px;
  justify-content: flex-start;
  gap: 1px;
}

.toggle {
  margin-left: 25px;
  margin-right: 3px;
  display: flex;
  font-size: 5.500px;
}

.toggle span {
  width: 18px;
  height: 9px;
  line-height: 9px;
  text-align: center;
  background-color: #3f3f3f;
  color: #666;
}

.toggle span.on {
  background-color: #666;
  color: #ddd;
}

.space-combo {
  margin-top: 4px;
  height: 13px;
  background-color: #505050;
  color: #6e6e6e;
  font-weight: 600;
  margin-bottom: 3px;
}

.prop-row {
  height: 14.100px;
  margin-right: 2px;
  display: flex;
  align-items: center;
  flex: none;
}

.prop-row label {
  width: 60px;
  flex: none;
  text-align: right;
  padding-right: 6px;
  box-sizing: border-box;
  color: #a8a8a8;
  white-space: nowrap;
}

.prop-value {
  flex: 1;
  min-width: 0;
  height: 12px;
  display: flex;
  align-items: center;
  padding: 0 3px 0 4px;
  box-sizing: border-box;
  background-color: #565656;
  color: #d8d8d8;
  font-weight: 600;
  gap: 4px;
  white-space: nowrap;
}

.prop-value.color {
  padding-left: 6px;
}

.prop-value.input,
.prop-value.height,
.prop-value.alpha {
  background-color: #525252;
  padding-left: 2px;
}

.prop-value.disabled {
  background-color: #505050;
  color: #6c6c6c;
  font-weight: 400;
  padding-left: 2px;
}

.prop-value.linetype .sample {
  width: 21px;
  border-top: 1px solid #ddd;
  margin-right: 8px;
}

.prop-value.alpha {
  flex: none;
  width: 46px;
  justify-content: flex-end;
  position: relative;
}

.slider {
  position: absolute;
  left: 1px;
  top: 2px;
  bottom: 2px;
  width: 1px;
  background-color: #5aa9e6;
}

.prop-extra {
  margin-left: 1px;
  flex: 1;
  height: 12px;
  display: flex;
  align-items: center;
  background-color: #565656;
  padding: 0 3px;
  box-sizing: border-box;
}

.prop-extra svg {
  width: 10px;
  height: 10px;
}

.prop-value.height {
  flex: none;
  width: 57px;
}

.prop-pick {
  margin-left: 2px;
  width: 11px;
  display: flex;
  align-items: center;
}
</style>

<style>
html,
body {
  background-color: #ffffff;
  margin: 0;
}
</style>
